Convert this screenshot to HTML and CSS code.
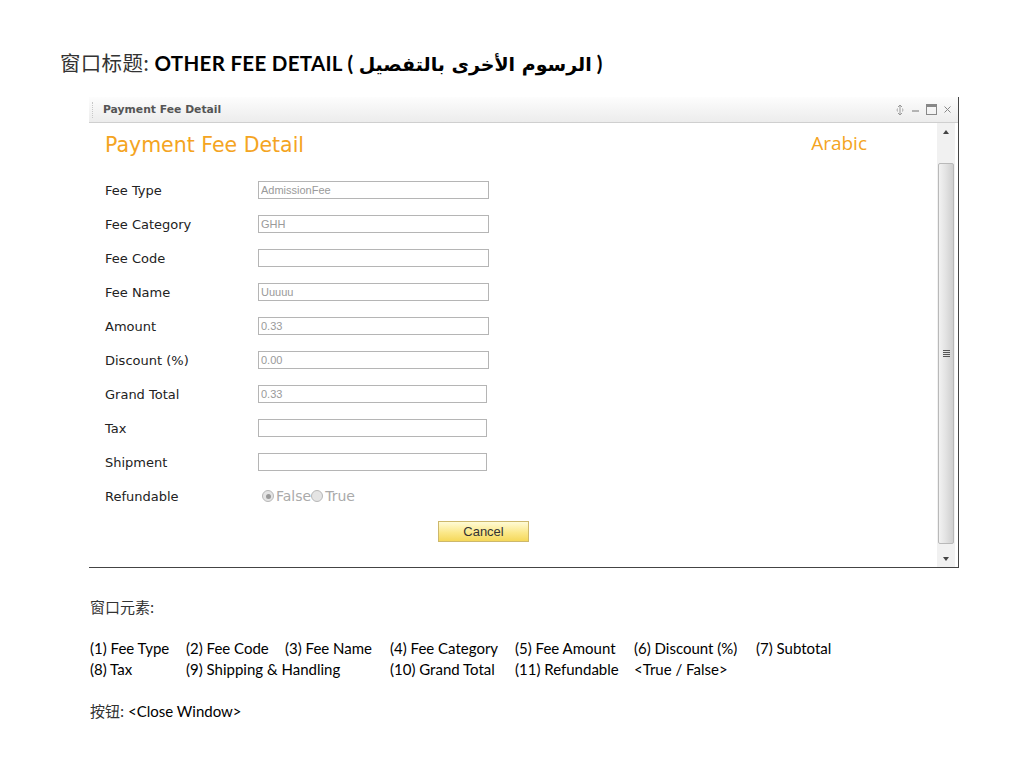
FILE: index.html
```html
<!DOCTYPE html>
<html lang="en">
  <head>
    <meta charset="UTF-8" />
    <title>Other Fee Detail</title>
    <link rel="stylesheet" href="styles.css">
  </head>
  <body>
    <h1 class="doc-title">
      <span class="cjk">窗口标题:</span> OTHER FEE DETAIL ( <span class="ar">الرسوم الأخرى بالتفصيل</span> )
    </h1>

    <!-- Window -->
    <div class="window">
      <div class="titlebar">
        <div class="grip"></div>
        <div class="titlebar-text">Payment Fee Detail</div>
        <div class="titlebar-tools">
          <svg width="10" height="12" viewBox="0 0 10 12">
            <path d="M5 1 L5 11 M3 3 L5 1 L7 3 M3 9 L5 11 L7 9" stroke="#999" stroke-width="1" fill="none"/>
            <path d="M2.5 4.5 A3 3 0 0 0 2.5 7.5 M7.5 4.5 A3 3 0 0 1 7.5 7.5" stroke="#aaa" stroke-width="1" fill="none"/>
          </svg>
          <svg width="9" height="12" viewBox="0 0 9 12">
            <path d="M1 7 H8" stroke="#888" stroke-width="1.2"/>
          </svg>
          <svg width="11" height="11" viewBox="0 0 11 11">
            <rect x="0.5" y="0.5" width="10" height="10" stroke="#888" fill="none"/>
            <path d="M0.5 2 H10.5" stroke="#888" stroke-width="2"/>
          </svg>
          <svg width="9" height="11" viewBox="0 0 9 11">
            <path d="M1.5 2.5 L7.5 8.5 M7.5 2.5 L1.5 8.5" stroke="#888" stroke-width="1"/>
          </svg>
        </div>
      </div>

      <div class="window-body">
        <div class="content">
          <div class="content-head">
            <h2>Payment Fee Detail</h2>
            <span class="lang">Arabic</span>
          </div>

          <div class="form">
            <div class="row"><label>Fee Type</label><input type="text" value="AdmissionFee" readonly></div>
            <div class="row"><label>Fee Category</label><input type="text" value="GHH" readonly></div>
            <div class="row"><label>Fee Code</label><input type="text" value=""></div>
            <div class="row"><label>Fee Name</label><input type="text" value="Uuuuu" readonly></div>
            <div class="row"><label>Amount</label><input type="text" value="0.33" readonly></div>
            <div class="row"><label>Discount (%)</label><input type="text" value="0.00" readonly></div>
            <div class="row"><label>Grand Total</label><input class="short" type="text" value="0.33" readonly></div>
            <div class="row"><label>Tax</label><input class="short" type="text" value=""></div>
            <div class="row"><label>Shipment</label><input class="short" type="text" value=""></div>
            <div class="row">
              <label>Refundable</label>
              <div class="radios">
                <span class="radio checked"></span><span>False</span>
                <span class="radio"></span><span>True</span>
              </div>
            </div>
          </div>

          <div class="actions">
            <button>Cancel</button>
          </div>
        </div>

        <div class="scrollbar">
          <div class="scroll-btn"><span class="arrow-up"></span></div>
          <div class="scroll-track">
            <div class="thumb"><span class="thumb-grip"></span></div>
          </div>
          <div class="scroll-btn"><span class="arrow-down"></span></div>
        </div>
      </div>
    </div>

    <!-- Notes -->
    <div class="notes">
      <p class="cjk">窗口元素:</p>
      <div class="elements">
        <span>(1) Fee Type</span>
        <span>(2) Fee Code</span>
        <span>(3) Fee Name</span>
        <span>(4) Fee Category</span>
        <span>(5) Fee Amount</span>
        <span>(6) Discount (%)</span>
        <span>(7) Subtotal</span>
        <span>(8) Tax</span>
        <span class="wide">(9) Shipping &amp; Handling</span>
        <span>(10) Grand Total</span>
        <span>(11) Refundable</span>
        <span>&lt;True / False&gt;</span>
      </div>
      <p><span class="cjk">按钮:</span> &lt;Close Window&gt;</p>
    </div>
  </body>
</html>
```

FILE: styles.css
```css
/* General */
body {
  margin: 0;
  padding: 0;
  background: #fff;
  color: #000;
  font-family: "Lato", "Noto Sans CJK SC", sans-serif;
}

.cjk {
  font-family: "Noto Sans CJK SC", sans-serif;
  font-weight: normal;
  color: #333;
}

.doc-title {
  margin: 0;
  padding: 50px 0 0 60px;
  font-size: 20.5px;
  line-height: 24px;
  font-weight: bold;
  letter-spacing: 0.3px;
}

.doc-title .ar {
  font-family: "DejaVu Sans", sans-serif;
  font-size: 19px;
  letter-spacing: 0;
}

/* Window */
.window {
  margin: 21px 0 0 89px;
  width: 869px;
  height: 470px;
  border-right: 1px solid #444;
  border-bottom: 1px solid #444;
  display: flex;
  flex-direction: column;
  font-family: "DejaVu Sans", sans-serif;
}

.titlebar {
  height: 25px;
  display: flex;
  align-items: center;
  background: linear-gradient(#fdfdfd, #ececec);
  border-bottom: 1px solid #cfcfcf;
}

.grip {
  width: 2px;
  height: 16px;
  margin: 0 8px 0 3px;
  border-left: 1px dotted #c8c8c8;
}

.titlebar-text {
  flex: 1;
  font-size: 10.8px;
  font-weight: bold;
  color: #555;
}

.titlebar-tools {
  display: flex;
  align-items: center;
  gap: 6px;
  padding-right: 6px;
}

.window-body {
  flex: 1;
  display: flex;
}

.content {
  flex: 1;
  padding: 9px 70px 0 16px;
}

.content-head {
  display: flex;
  justify-content: space-between;
  align-items: center;
  height: 26px;
}

.content-head h2 {
  margin: 0;
  font-size: 20.5px;
  font-weight: normal;
  color: #f4a422;
}

.content-head .lang {
  font-family: "Open Sans", sans-serif;
  font-size: 19px;
  color: #f4a422;
  margin-top: -4px;
}

.form {
  margin-top: 15px;
}

.row {
  height: 34px;
  display: flex;
  align-items: center;
}

.row label {
  width: 153px;
  font-size: 13px;
  color: #222;
}

.row input {
  width: 231px;
  height: 18px;
  box-sizing: border-box;
  border: 1px solid #b5b5b5;
  padding: 0 2px;
  font-family: "Liberation Sans", sans-serif;
  font-size: 11px;
  color: #9a9a9a;
  outline: none;
}

.row input.short {
  width: 229px;
}

.radios {
  display: flex;
  align-items: center;
  padding-left: 4px;
  font-size: 14px;
  color: #aaa;
}

.radio {
  width: 10px;
  height: 10px;
  border: 1px solid #b8b8b8;
  border-radius: 50%;
  background: #e4e4e4;
  margin-right: 2px;
  position: relative;
}

.radio.checked::after {
  content: "";
  position: absolute;
  left: 2.5px;
  top: 2.5px;
  width: 5px;
  height: 5px;
  border-radius: 50%;
  background: #999;
}

.actions {
  margin-top: 8px;
  padding-left: 333px;
}

.actions button {
  width: 91px;
  height: 21px;
  border: 1px solid #cdb86c;
  background: linear-gradient(#fffbd6, #fbe88a 55%, #f5d85a);
  font-family: "Liberation Sans", sans-serif;
  font-size: 13px;
  color: #333;
  padding: 0;
}

/* Scrollbar */
.scrollbar {
  width: 18px;
  margin-right: 3px;
  background: #f1f1f1;
  display: flex;
  flex-direction: column;
}

.scroll-btn {
  height: 17px;
  display: flex;
  justify-content: center;
  align-items: center;
}

.arrow-up {
  border-left: 3px solid transparent;
  border-right: 3px solid transparent;
  border-bottom: 4px solid #444;
}

.arrow-down {
  border-left: 3px solid transparent;
  border-right: 3px solid transparent;
  border-top: 4px solid #444;
}

.scroll-track {
  flex: 1;
  padding: 23px 1px 6px;
}

.thumb {
  height: 100%;
  box-sizing: border-box;
  border: 1px solid #b9b9b9;
  border-radius: 2px;
  background: linear-gradient(90deg, #f2f2f2, #e2e2e2 50%, #cfcfcf);
  display: flex;
  justify-content: center;
  align-items: center;
}

.thumb-grip {
  width: 7px;
  height: 7px;
  background: repeating-linear-gradient(#555 0 1px, transparent 1px 2px);
}

/* Notes */
.notes {
  padding: 28px 0 0 90px;
  font-size: 15px;
  line-height: 21px;
}

.notes p {
  margin: 0;
}

.notes .cjk {
  font-size: 15px;
}

.elements {
  margin: 21px 0 20px;
  display: grid;
  grid-template-columns: 96px 99px 105px 125px 119px 122px auto;
  white-space: nowrap;
}

.elements .wide {
  grid-column: span 2;
}
```
